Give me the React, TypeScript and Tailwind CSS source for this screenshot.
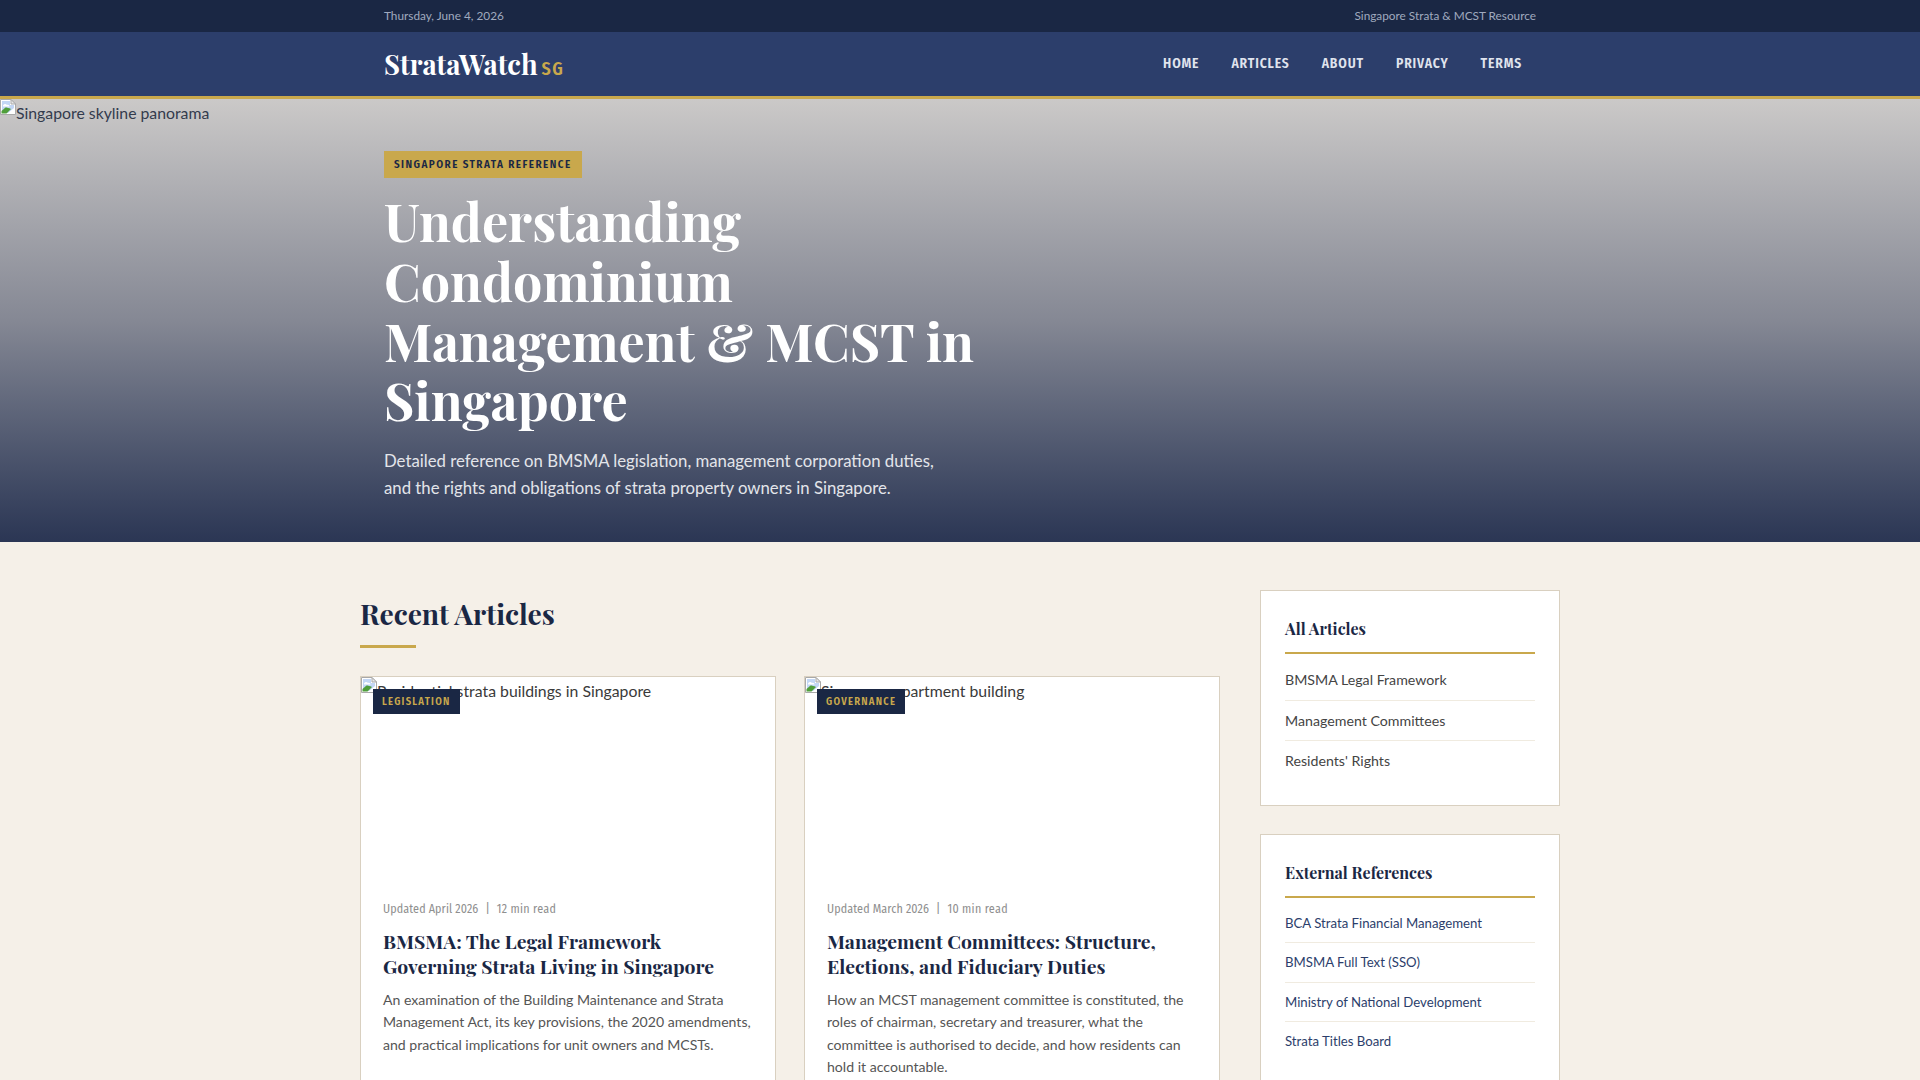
const serif = "font-['Playfair_Display','Liberation_Serif',serif]"
const condensed = "font-['Fira_Sans_Condensed','Liberation_Sans_Narrow',sans-serif]"

function BrokenImage({ alt, className }: { alt: string; className?: string }) {
  return (
    <div className={"flex items-start text-[15.8px] leading-[27px] " + (className ?? "")}>
      <svg width="16" height="16" viewBox="0 0 16 16" className="shrink-0">
        <path d="M0.5 0.5H11L15.5 5V15.5H0.5Z" fill="#fff" stroke="#a9a9a9" />
        <path d="M2 2H10V6H14V9L8 14H2Z" fill="#c3d7f5" />
        <path d="M11 0.5V5H15.5Z" fill="#e8e8e8" stroke="#a9a9a9" />
        <path d="M3 6.5C4 4.5 6 4.5 7 6C8.5 5.5 9.5 6.5 9.5 7.5H3Z" fill="#fff" />
        <path d="M1.5 14.5V12L5.5 8.5C7 8.5 9 9 11 10L6.5 14.5Z" fill="#4f9e3a" />
      </svg>
      <span>{alt}</span>
    </div>
  )
}

function Card({ image, tag, date, mins, title, text }: { image: string; tag: string; date: string; mins: string; title: string; text: string }) {
  return (
    <article className="border border-[#d9d0c0] bg-white">
      <div className="relative h-[200px] text-[#3a3a3a]">
        <BrokenImage alt={image} />
        <span className={condensed + " absolute left-3 top-3 bg-[#1a2744] px-[9px] py-[5px] text-[10.5px] font-semibold leading-[15px] tracking-[1.25px] text-[#c9a84c]"}>
          {tag}
        </span>
      </div>
      <div className="px-[22px] pb-[22px] pt-[23px]">
        <div className={condensed + " flex items-center text-[12px] leading-[18px] tracking-[0.12px] text-[#8f8f8f]"}>
          <span>{date}</span>
          <span className="mx-[7px]">|</span>
          <span className="tracking-[0.3px]">{mins}</span>
        </div>
        <h3 className={serif + " mt-[11px] text-[19.4px] font-bold leading-[25px] text-[#1a2744]"}>{title}</h3>
        <p className="-mr-[6px] mt-[9.5px] text-[14.1px] leading-[22.5px] text-[#555555]">{text}</p>
      </div>
    </article>
  )
}

function SideBox({ title, links, linkClass }: { title: string; links: string[]; linkClass: string }) {
  return (
    <section className="border border-[#d9d0c0] bg-white px-6 pb-6 pt-[26px]">
      <h4 className={serif + " border-b-2 border-[#c9a84c] pb-[11px] text-[16px] font-bold leading-[24px] text-[#1a2744]"}>{title}</h4>
      <ul className="mt-[6px]">
        {links.map((link) => (
          <li key={link} className={"border-b border-[#f0ebe0] py-[9px] last:border-b-0 " + linkClass}>
            {link}
          </li>
        ))}
      </ul>
    </section>
  )
}

export default function App() {
  return (
    <div className="h-[1080px] overflow-hidden bg-[#f5f0e8] font-['Lato',sans-serif]">
      <div className="h-8 bg-[#1a2744]">
        <div className="mx-auto flex h-full w-[1200px] items-center justify-between px-6 text-[11.8px] text-[#a0aabf]">
          <span>Thursday, June 4, 2026</span>
          <span>Singapore Strata &amp; MCST Resource</span>
        </div>
      </div>

      <header className="h-[67px] border-b-[3px] border-[#c9a84c] bg-[#2c3e6b]">
        <div className="mx-auto flex h-full w-[1200px] items-center justify-between px-6">
          <div className="flex items-baseline">
            <span className={serif + " text-[27.4px] font-bold leading-[40px] text-white"}>StrataWatch</span>
            <span className={condensed + " ml-1 text-[18px] font-semibold tracking-[1.5px] text-[#c9a84c]"}>SG</span>
          </div>
          <nav className={condensed + " -mr-[2px] flex text-[13.6px] font-semibold tracking-[0.85px] text-[#e0e4ee]"}>
            <a className="px-4">HOME</a>
            <a className="px-4">ARTICLES</a>
            <a className="px-4">ABOUT</a>
            <a className="px-4">PRIVACY</a>
            <a className="px-4">TERMS</a>
          </nav>
        </div>
      </header>

      <section className="relative h-[443px] bg-gradient-to-b from-[#cbc9c8] via-[#858894] to-[#2b3654]">
        <BrokenImage alt="Singapore skyline panorama" className="absolute left-0 top-0 text-[#333b4d]" />
        <div className="mx-auto w-[1200px] px-6 pt-[52px]">
          <span className={condensed + " block w-fit bg-[#c9a84c] px-[10px] py-[6px] text-[11px] font-semibold leading-[15px] tracking-[1.45px] text-[#1a2744]"}>
            SINGAPORE STRATA REFERENCE
          </span>
          <h1 className={serif + " mt-[13px] w-[620px] text-[52px] font-bold leading-[59.8px] text-white"}>
            Understanding Condominium Management &amp; MCST in Singapore
          </h1>
          <p className="mt-[17px] w-[560px] text-[16.75px] leading-[27px] text-[#e3e5ea]">
            Detailed reference on BMSMA legislation, management corporation duties, and the rights and obligations of strata property owners in Singapore.
          </p>
        </div>
      </section>

      <main className="mx-auto flex w-[1200px] gap-10 pt-12">
        <div className="w-[860px] shrink-0">
          <h2 className={serif + " text-[28.2px] font-bold leading-[46px] text-[#1a2744]"}>Recent Articles</h2>
          <div className="mt-[9px] h-[3px] w-14 bg-[#c9a84c]" />
          <div className="mt-7 grid grid-cols-2 gap-7">
            <Card
              image="Residential strata buildings in Singapore"
              tag="LEGISLATION"
              date="Updated April 2026"
              mins="12 min read"
              title="BMSMA: The Legal Framework Governing Strata Living in Singapore"
              text="An examination of the Building Maintenance and Strata Management Act, its key provisions, the 2020 amendments, and practical implications for unit owners and MCSTs."
            />
            <Card
              image="Singapore apartment building"
              tag="GOVERNANCE"
              date="Updated March 2026"
              mins="10 min read"
              title="Management Committees: Structure, Elections, and Fiduciary Duties"
              text="How an MCST management committee is constituted, the roles of chairman, secretary and treasurer, what the committee is authorised to decide, and how residents can hold it accountable."
            />
          </div>
        </div>
        <aside className="flex w-[300px] flex-col gap-7">
          <SideBox
            title="All Articles"
            links={["BMSMA Legal Framework", "Management Committees", "Residents' Rights"]}
            linkClass="text-[14.2px] leading-[21.6px] text-[#444444]"
          />
          <SideBox
            title="External References"
            links={["BCA Strata Financial Management", "BMSMA Full Text (SSO)", "Ministry of National Development", "Strata Titles Board"]}
            linkClass="text-[13.2px] leading-[20.4px] text-[#2c3e6b]"
          />
        </aside>
      </main>
    </div>
  )
}
